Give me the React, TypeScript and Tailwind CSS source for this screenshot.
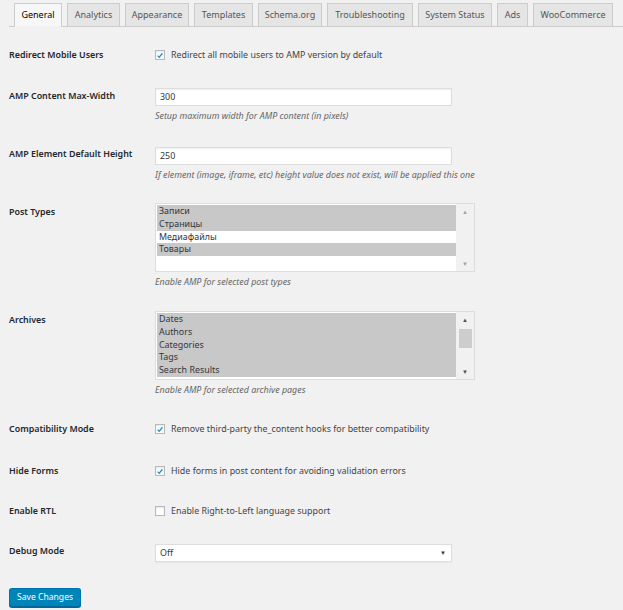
import type { ReactNode } from "react";

const TABS = [
  { label: "General", width: "w-[48px]" },
  { label: "Analytics", width: "w-[53px]" },
  { label: "Appearance", width: "w-[64px]" },
  { label: "Templates", width: "w-[59px]" },
  { label: "Schema.org", width: "w-[64px]" },
  { label: "Troubleshooting", width: "w-[86px]" },
  { label: "System Status", width: "w-[74px]" },
  { label: "Ads", width: "w-[31px]" },
  { label: "WooCommerce", width: "w-[80px]" },
];

const Checkbox = ({ checked }: { checked: boolean }) => (
  <span className="flex h-[10px] w-[10px] shrink-0 items-center justify-center border border-[#b4b9be] bg-white shadow-[inset_0_1px_2px_rgba(0,0,0,0.1)]">
    {checked ? (
      <svg viewBox="0 0 10 10" className="h-[9px] w-[9px]">
        <path d="M2 5.2 L4 7.3 L8 2.2" fill="none" stroke="#1e8cbe" strokeWidth="1.6" />
      </svg>
    ) : null}
  </span>
);

const Row = ({
  label,
  top,
  labelPad = "",
  children,
}: {
  label: string;
  top: string;
  labelPad?: string;
  children: ReactNode;
}) => (
  <div className={`grid grid-cols-[146px_1fr] items-start ${top}`}>
    <div className={`font-semibold leading-[14px] text-[#23282d] ${labelPad}`}>{label}</div>
    <div>{children}</div>
  </div>
);

const CheckRow = ({ checked, text }: { checked: boolean; text: string }) => (
  <label className="flex h-[14px] items-center gap-[6px] text-[#444]">
    <Checkbox checked={checked} />
    {text}
  </label>
);

const Description = ({ children }: { children: ReactNode }) => (
  <p className="mt-[3px] leading-[14px] italic text-[#666]">{children}</p>
);

const TextInput = ({ value }: { value: string }) => (
  <div className="flex h-[18px] w-[297px] items-center border border-[#ddd] bg-white pl-[4px] text-[#32373c] shadow-[inset_0_1px_2px_rgba(0,0,0,0.07)]">
    {value}
  </div>
);

// Native multi-selects; the scrollbar is only drawn, nothing actually scrolls.
const ListBox = ({
  items,
  scrollable,
}: {
  items: { label: string; selected: boolean }[];
  scrollable: boolean;
}) => {
  const arrow = scrollable ? "text-[#505050]" : "text-[#a3a3a3]";
  return (
    <div className="flex h-[69px] w-[320px] border border-[#ddd] bg-white">
      <div className="flex-1 overflow-hidden py-[1px] pl-[1px]">
        {items.map((item) => (
          <div
            key={item.label}
            className={`h-[12.8px] pl-[2px] leading-[12.8px] text-[#32373c] ${item.selected ? "bg-[#c8c8c8]" : ""}`}
          >
            {item.label}
          </div>
        ))}
      </div>
      <div className="flex w-[18px] flex-col items-center bg-[#f1f1f1] pb-[3px] pt-[4px]">
        <span className={`h-[8px] text-[6px] leading-[8px] ${arrow}`}>▲</span>
        {scrollable ? <span className="mt-[5px] h-[19px] w-[13px] bg-[#cdcdcd]" /> : null}
        <span className="flex-1" />
        <span className={`h-[8px] text-[6px] leading-[8px] ${arrow}`}>▼</span>
      </div>
    </div>
  );
};

export default function App() {
  return (
    <div className="min-h-[610px] bg-[#f1f1f1] font-['Noto_Sans',sans-serif] text-[8.9px] text-[#444]">
      <nav className="ml-[9px] flex gap-[5px] border-b border-[#ccc] pl-[5px] pt-[3px]">
        {TABS.map((tab, i) => (
          <span
            key={tab.label}
            className={`-mb-px flex h-[24px] items-center justify-center whitespace-nowrap border border-[#ccc] text-[9px] ${tab.width} ${
              i === 0 ? "border-b-[#f1f1f1] bg-[#f7f7f7] text-black" : "bg-[#e5e5e5] text-[#555]"
            }`}
          >
            {tab.label}
          </span>
        ))}
      </nav>

      <div className="pl-[9px]">
        <Row label="Redirect Mobile Users" top="mt-[21px]">
          <CheckRow checked text="Redirect all mobile users to AMP version by default" />
        </Row>

        <Row label="AMP Content Max-Width" top="mt-[26px]" labelPad="pt-[1px]">
          <TextInput value="300" />
          <Description>Setup maximum width for AMP content (in pixels)</Description>
        </Row>

        <Row label="AMP Element Default Height" top="mt-[24px]">
          <TextInput value="250" />
          <Description>If element (image, iframe, etc) height value does not exist, will be applied this one</Description>
        </Row>

        <Row label="Post Types" top="mt-[21px]" labelPad="pt-[2px]">
          <ListBox
            scrollable={false}
            items={[
              { label: "Записи", selected: true },
              { label: "Страницы", selected: true },
              { label: "Медиафайлы", selected: false },
              { label: "Товары", selected: true },
            ]}
          />
          <Description>Enable AMP for selected post types</Description>
        </Row>

        <Row label="Archives" top="mt-[22px]" labelPad="pt-[2px]">
          <ListBox
            scrollable
            items={[
              { label: "Dates", selected: true },
              { label: "Authors", selected: true },
              { label: "Categories", selected: true },
              { label: "Tags", selected: true },
              { label: "Search Results", selected: true },
            ]}
          />
          <Description>Enable AMP for selected archive pages</Description>
        </Row>

        <Row label="Compatibility Mode" top="mt-[25px]">
          <CheckRow checked text="Remove third-party the_content hooks for better compatibility" />
        </Row>

        <Row label="Hide Forms" top="mt-[28px]">
          <CheckRow checked text="Hide forms in post content for avoiding validation errors" />
        </Row>

        <Row label="Enable RTL" top="mt-[26px]">
          <CheckRow checked={false} text="Enable Right-to-Left language support" />
        </Row>

        <Row label="Debug Mode" top="mt-[26px]">
          <div className="flex h-[18px] w-[297px] items-center justify-between border border-[#ddd] bg-white pl-[4px] pr-[5px] text-[#32373c] shadow-[0_1px_1px_rgba(0,0,0,0.04)]">
            <span>Off</span>
            <span className="text-[6px]">▼</span>
          </div>
        </Row>

        <button className="mt-[26px] h-[19px] rounded-[3px] border border-[#0073aa] border-b-[#006799] bg-[#0085ba] px-[7px] text-[8.6px] leading-none text-white shadow-[0_1px_0_#006799]">
          Save Changes
        </button>
      </div>
    </div>
  );
}
